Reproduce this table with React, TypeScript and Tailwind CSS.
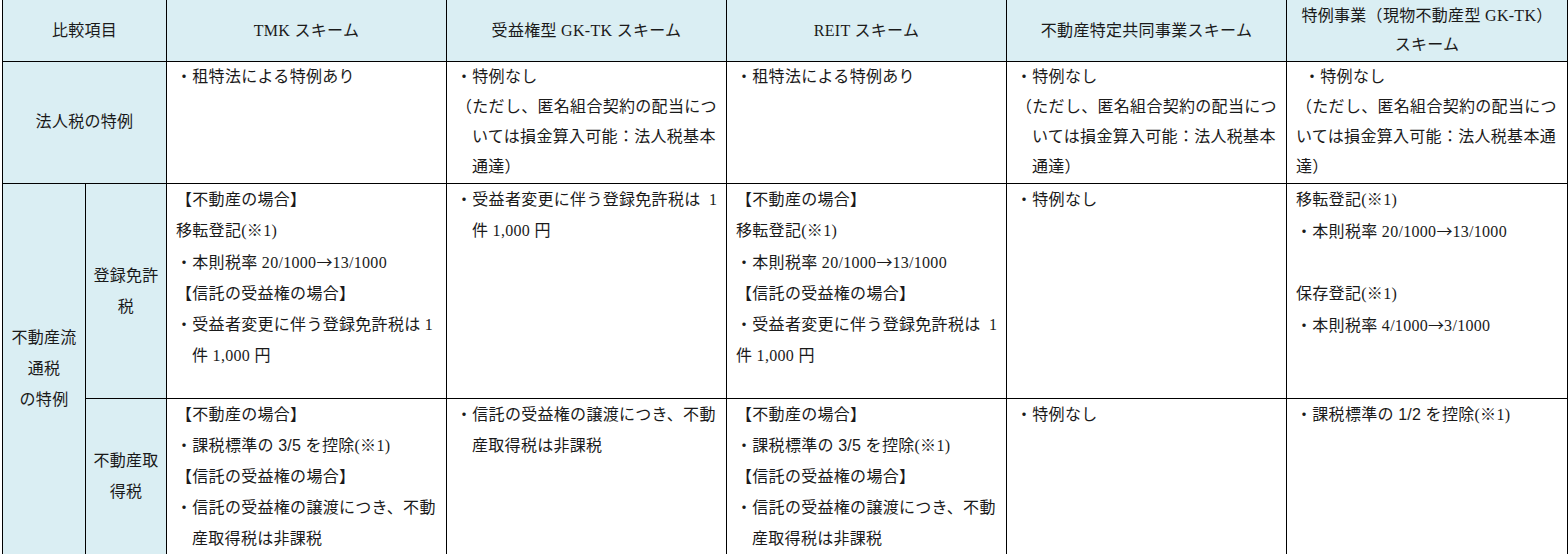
import React from 'react';

type Line = { t: React.ReactNode; hang?: boolean; shift?: boolean };

const Lines = ({ lines, lh = 'leading-[31px]' }: { lines: Line[]; lh?: string }) => (
  <div className={lh}>
    {lines.map((l, i) => (
      <div
        key={i}
        className={`whitespace-nowrap ${l.hang ? 'pl-[16px]' : ''} ${l.shift ? 'pl-[8px]' : ''}`}
      >
        {l.t === '' ? '\u00a0' : l.t}
      </div>
    ))}
  </div>
);

const sans = (s: string) => <span className="font-['Liberation_Sans',sans-serif]">{s}</span>;

// 税率の矢印は全角の字形に合わせる
const rate = (from: string, to: string) => (
  <>
    ・本則税率 {from}
    <span className="font-['Noto_Sans_CJK_JP',sans-serif] tracking-normal">→</span>
    {to}
  </>
);

const noTokurei: Line[] = [{ t: '・特例なし' }];

const App = () => {
  const th = 'border border-black border-t-0 bg-[#daeef3] text-center align-middle font-normal';
  const side = 'border border-black bg-[#daeef3] text-center align-middle';
  const td = 'border border-black align-top pl-[9px] pr-0 pt-0';

  return (
    <div className="w-[1568px] h-[554px] overflow-hidden bg-white">
      <table className="ml-[2px] w-[1565px] table-fixed border-collapse text-[16px] tracking-[0.3px] text-[#1a1a1a] font-['Liberation_Serif','Noto_Sans_CJK_JP',serif]">
        <colgroup>
          <col className="w-[83px]" />
          <col className="w-[81px]" />
          <col className="w-[280px]" />
          <col className="w-[280px]" />
          <col className="w-[280px]" />
          <col className="w-[280px]" />
          <col className="w-[281px]" />
        </colgroup>
        <thead>
          <tr className="h-[61px] leading-[29px]">
            <th colSpan={2} className={th}>比較項目</th>
            <th className={th}>TMK スキーム</th>
            <th className={th}>受益権型 GK-TK スキーム</th>
            <th className={th}>REIT スキーム</th>
            <th className={th}>不動産特定共同事業スキーム</th>
            <th className={th}>
              特例事業（現物不動産型 GK-TK）
              <br />
              スキーム
            </th>
          </tr>
        </thead>
        <tbody>
          <tr className="h-[122px]">
            <td colSpan={2} className={side}>法人税の特例</td>
            <td className={td}>
              <Lines lh="leading-[30px]" lines={[{ t: '・租特法による特例あり' }]} />
            </td>
            <td className={td}>
              <Lines
                lh="leading-[30px]"
                lines={[
                  { t: '・特例なし' },
                  { t: '（ただし、匿名組合契約の配当につ' },
                  { t: 'いては損金算入可能：法人税基本', hang: true },
                  { t: '通達）', hang: true },
                ]}
              />
            </td>
            <td className={td}>
              <Lines lh="leading-[30px]" lines={[{ t: '・租特法による特例あり' }]} />
            </td>
            <td className={td}>
              <Lines
                lh="leading-[30px]"
                lines={[
                  { t: '・特例なし' },
                  { t: '（ただし、匿名組合契約の配当につ' },
                  { t: 'いては損金算入可能：法人税基本', hang: true },
                  { t: '通達）', hang: true },
                ]}
              />
            </td>
            <td className={td}>
              <Lines
                lh="leading-[30px]"
                lines={[
                  { t: '・特例なし', shift: true },
                  { t: '（ただし、匿名組合契約の配当につ' },
                  { t: 'いては損金算入可能：法人税基本通' },
                  { t: '達）' },
                ]}
              />
            </td>
          </tr>

          <tr className="h-[215px]">
            <td rowSpan={2} className={`${side} leading-[31px]`}>
              不動産流
              <br />
              通税
              <br />
              の特例
            </td>
            <td className={`${side} leading-[31px]`}>
              登録免許
              <br />
              税
            </td>
            <td className={td}>
              <Lines
                lines={[
                  { t: '【不動産の場合】' },
                  { t: '移転登記(※1)' },
                  { t: rate('20/1000', '13/1000') },
                  { t: '【信託の受益権の場合】' },
                  { t: '・受益者変更に伴う登録免許税は 1' },
                  { t: '件 1,000 円', hang: true },
                ]}
              />
            </td>
            <td className={td}>
              <Lines
                lines={[
                  { t: '・受益者変更に伴う登録免許税は\u00a0 1' },
                  { t: '件 1,000 円', hang: true },
                ]}
              />
            </td>
            <td className={td}>
              <Lines
                lines={[
                  { t: '【不動産の場合】' },
                  { t: '移転登記(※1)' },
                  { t: rate('20/1000', '13/1000') },
                  { t: '【信託の受益権の場合】' },
                  { t: '・受益者変更に伴う登録免許税は\u00a0 1' },
                  { t: '件 1,000 円' },
                ]}
              />
            </td>
            <td className={td}>
              <Lines lines={noTokurei} />
            </td>
            <td className={td}>
              <Lines
                lines={[
                  { t: '移転登記(※1)' },
                  { t: rate('20/1000', '13/1000') },
                  { t: '' },
                  { t: '保存登記(※1)' },
                  { t: rate('4/1000', '3/1000') },
                ]}
              />
            </td>
          </tr>

          <tr className="h-[156px]">
            <td className={`${side} leading-[31px]`}>
              不動産取
              <br />
              得税
            </td>
            <td className={td}>
              <Lines
                lines={[
                  { t: '【不動産の場合】' },
                  { t: <>・課税標準の {sans('3/5')} を控除(※1)</> },
                  { t: '【信託の受益権の場合】' },
                  { t: '・信託の受益権の譲渡につき、不動' },
                  { t: '産取得税は非課税', hang: true },
                ]}
              />
            </td>
            <td className={td}>
              <Lines
                lines={[
                  { t: '・信託の受益権の譲渡につき、不動' },
                  { t: '産取得税は非課税', hang: true },
                ]}
              />
            </td>
            <td className={td}>
              <Lines
                lines={[
                  { t: '【不動産の場合】' },
                  { t: <>・課税標準の {sans('3/5')} を控除(※1)</> },
                  { t: '【信託の受益権の場合】' },
                  { t: '・信託の受益権の譲渡につき、不動' },
                  { t: '産取得税は非課税', hang: true },
                ]}
              />
            </td>
            <td className={td}>
              <Lines lines={noTokurei} />
            </td>
            <td className={td}>
              <Lines lines={[{ t: <>・課税標準の {sans('1/2')} を控除(※1)</> }]} />
            </td>
          </tr>
        </tbody>
      </table>
    </div>
  );
};

export default App;
